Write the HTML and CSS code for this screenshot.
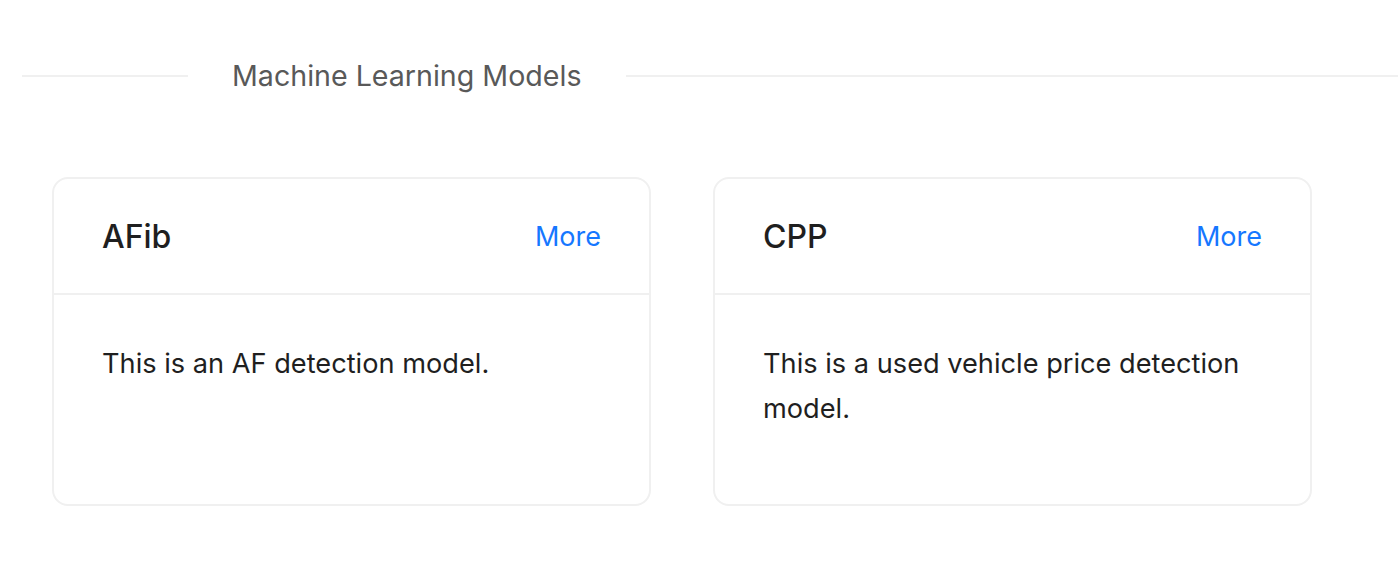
FILE: index.html
```html
<!DOCTYPE html>
<html>
<head>
<meta charset="utf-8">
<link rel="stylesheet" href="styles.css">
</head>
<body>
<div class="page">
  <div class="divider">
    <span class="divider-line divider-left"></span>
    <span class="divider-text">Machine Learning Models</span>
    <span class="divider-line divider-right"></span>
  </div>
  <div class="cards">
    <div class="card">
      <div class="card-head">
        <span class="card-title">AFib</span>
        <a class="card-extra">More</a>
      </div>
      <div class="card-body">This is an AF detection model.</div>
    </div>
    <div class="card">
      <div class="card-head">
        <span class="card-title">CPP</span>
        <a class="card-extra">More</a>
      </div>
      <div class="card-body">This is a used vehicle price detection model.</div>
    </div>
  </div>
</div>
</body>
</html>
```
FILE: styles.css
```css
* { box-sizing: border-box; }
html, body { margin: 0; padding: 0; background: #fff; }
body {
  font-family: Inter, "Noto Sans", "Liberation Sans", sans-serif;
  color: #1f1f1f;
}
.page {
  padding: 50px 0 0 22px;
}
.divider {
  display: flex;
  align-items: center;
  height: 52px;
}
.divider-line {
  height: 2px;
  background: #f0f0f0;
}
.divider-left { width: 166px; }
.divider-right { flex: 1; }
.divider-text {
  padding: 0 44px;
  font-size: 28.6px;
  color: #595959;
  line-height: 52px;
}
.cards {
  display: flex;
  gap: 62px;
  margin-top: 75px;
  padding-left: 30px;
}
.card {
  width: 599px;
  height: 329px;
  border: 2px solid #f0f0f0;
  border-radius: 16px;
  display: flex;
  flex-direction: column;
}
.card-head {
  height: 116px;
  border-bottom: 2px solid #f0f0f0;
  padding: 0 48px;
  display: flex;
  align-items: center;
  justify-content: space-between;
}
.card-title {
  font-size: 32px;
  font-weight: 500;
  color: #1f1f1f;
}
.card-extra {
  font-size: 27px;
  color: #1677ff;
}
.card-body {
  padding: 46px 48px;
  font-size: 27.2px;
  line-height: 45px;
  color: #1f1f1f;
}
```
